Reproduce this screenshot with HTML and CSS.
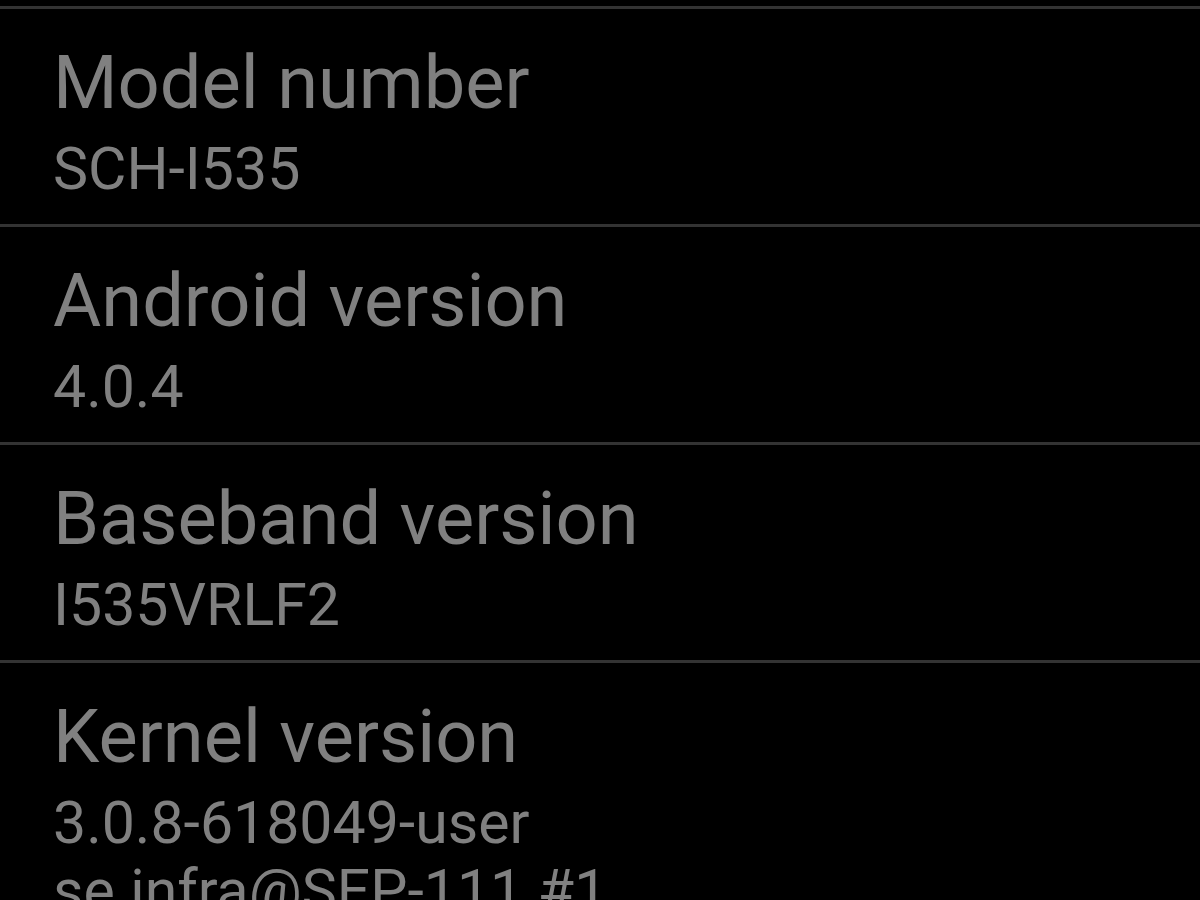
FILE: index.html
```html
<!DOCTYPE html>
<html lang="en">
<head>
<meta charset="utf-8">
<title>About phone</title>
<link rel="stylesheet" href="styles.css">
</head>
<body>
<div class="list">
  <div class="item">
    <div class="title">Model number</div>
    <div class="summary">SCH-I535</div>
  </div>
  <div class="item">
    <div class="title">Android version</div>
    <div class="summary">4.0.4</div>
  </div>
  <div class="item">
    <div class="title">Baseband version</div>
    <div class="summary">I535VRLF2</div>
  </div>
  <div class="item">
    <div class="title">Kernel version</div>
    <div class="summary">3.0.8-618049-user<br>se.infra@SEP-111 #1</div>
  </div>
</div>
</body>
</html>
```

FILE: styles.css
```css
html, body {
  margin: 0;
  padding: 0;
  background: #000;
  height: 100%;
  overflow: hidden;
}

body {
  font-family: Roboto, "Noto Sans", sans-serif;
  color: #808080;
}

.list {
  padding-top: 6px;
  display: flex;
  flex-direction: column;
}

.item {
  border-top: 3px solid #333333;
  padding: 31px 0 21px 53px;
  display: flex;
  flex-direction: column;
}

.title {
  font-size: 74px;
  line-height: 86px;
}

.summary {
  font-size: 59px;
  line-height: 68px;
  margin-top: 9px;
}
```
